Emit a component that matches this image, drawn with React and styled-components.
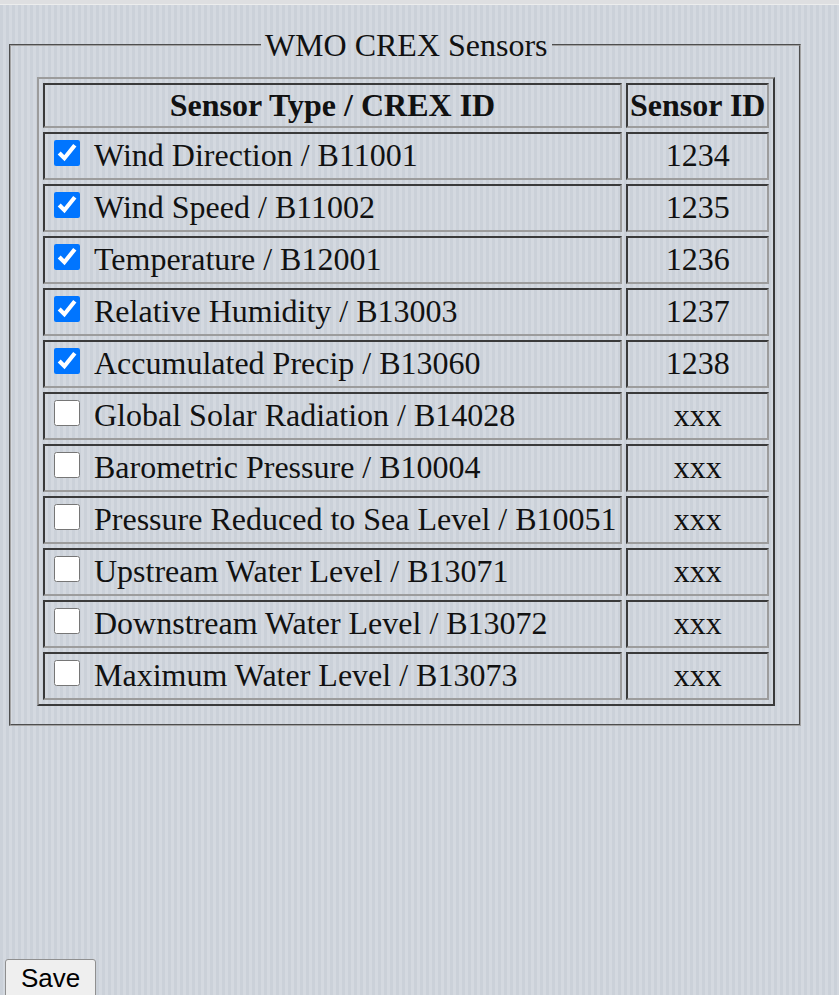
import React from "react";
import styled, { createGlobalStyle } from "styled-components";

const Global = createGlobalStyle`
  html, body { margin: 0; padding: 0; }
  body {
    min-height: 995px;
    background-color: #cfd5dc;
    background-image: repeating-linear-gradient(
      to right,
      #cbd1d9 0px, #cbd1d9 3px,
      #d4d9e0 3px, #d4d9e0 6px
    );
    font-family: "Liberation Serif", "Times New Roman", serif;
    color: #111;
  }
`;

const TopStrip = styled.div`
  height: 4px;
  background: #dedfe1;
  border-bottom: 1px solid #eceded;
`;

const Main = styled.main`
  padding-top: 22px;
`;

const Fieldset = styled.fieldset`
  width: fit-content;
  margin: 0 0 0 9px;
  padding: 13px 24px 18px 26px;
  border: 2px groove #a2a2a2;
`;

const Legend = styled.legend`
  margin: 0 auto;
  padding: 0 4px;
  font-size: 32px;
  line-height: 36.8px;
`;

const Table = styled.table`
  table-layout: fixed;
  border-collapse: separate;
  border-spacing: 4px;
  border: 2px solid;
  border-color: #9c9c9c #3a3a3a #3a3a3a #9c9c9c;
  font-size: 32px;
`;

const cellBase = `
  box-sizing: border-box;
  border: 2px solid;
  border-color: #3a3a3a #9c9c9c #9c9c9c #3a3a3a;
  padding: 2px;
  white-space: nowrap;
  vertical-align: middle;
`;

const Th = styled.th`
  ${cellBase}
  width: ${(p) => p.$w}px;
  height: 44px;
  font-weight: bold;
  text-align: center;
  line-height: 36.8px;
`;

const Td = styled.td`
  ${cellBase}
  height: 48px;
  line-height: 36.8px;
  text-align: ${(p) => (p.$center ? "center" : "left")};
`;

const Label = styled.label`
  display: flex;
  align-items: center;
`;

const Check = styled.input`
  width: 26px;
  height: 26px;
  margin: 0 14px 5px 7px;
  flex: none;
`;

const ButtonBar = styled.div`
  margin-top: 233px;
  padding-left: 5px;
`;

const SaveButton = styled.button`
  font-family: "Liberation Sans", Arial, sans-serif;
  font-size: 26px;
  padding: 3px 15px 4px 15px;
  background: #efefef;
  border: 1px solid #8f8f8f;
  border-radius: 3px;
  color: #000;
`;

const sensors = [
  ["Wind Direction / B11001", "1234", true],
  ["Wind Speed / B11002", "1235", true],
  ["Temperature / B12001", "1236", true],
  ["Relative Humidity / B13003", "1237", true],
  ["Accumulated Precip / B13060", "1238", true],
  ["Global Solar Radiation / B14028", "xxx", false],
  ["Barometric Pressure / B10004", "xxx", false],
  ["Pressure Reduced to Sea Level / B10051", "xxx", false],
  ["Upstream Water Level / B13071", "xxx", false],
  ["Downstream Water Level / B13072", "xxx", false],
  ["Maximum Water Level / B13073", "xxx", false],
];

export default function App() {
  return (
    <>
      <Global />
      <TopStrip />
      <Main>
        <Fieldset>
          <Legend>WMO CREX Sensors</Legend>
          <Table>
            <thead>
              <tr>
                <Th $w={579}>Sensor Type / CREX ID</Th>
                <Th $w={143}>Sensor ID</Th>
              </tr>
            </thead>
            <tbody>
              {sensors.map(([name, id, on]) => (
                <tr key={name}>
                  <Td>
                    <Label>
                      <Check type="checkbox" defaultChecked={on} />
                      {name}
                    </Label>
                  </Td>
                  <Td $center>{id}</Td>
                </tr>
              ))}
            </tbody>
          </Table>
        </Fieldset>
        <ButtonBar>
          <SaveButton type="button">Save</SaveButton>
        </ButtonBar>
      </Main>
    </>
  );
}
